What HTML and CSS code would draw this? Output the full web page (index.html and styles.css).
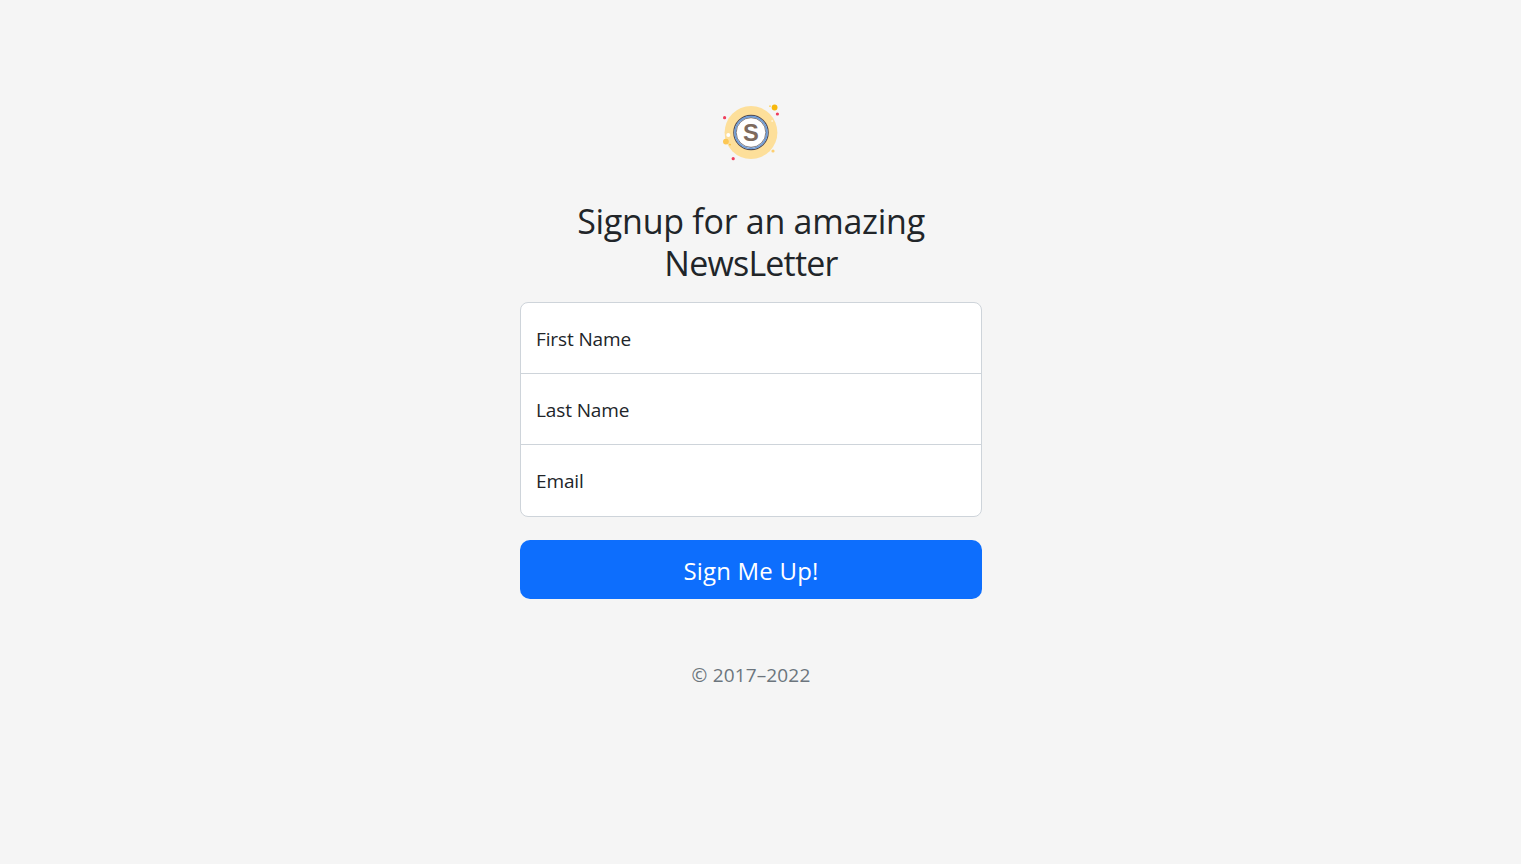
FILE: index.html
```html
<!DOCTYPE html>
<html lang="en">
<head>
<meta charset="utf-8">
<title>Newsletter Signup</title>
<link rel="stylesheet" href="styles.css">
</head>
<body>
<main class="signup">
  <form class="form">
    <svg class="logo" viewBox="0 0 72 72" aria-hidden="true">
      <circle cx="36" cy="36.5" r="26.4" fill="#fddf9a"/>
      <circle cx="36" cy="36.5" r="17.2" fill="#fff" stroke="#514a52" stroke-width="1.2"/>
      <circle cx="36" cy="36.5" r="15.9" fill="none" stroke="#6b9ddb" stroke-width="1.7"/>
      <circle cx="36" cy="36.5" r="14.8" fill="none" stroke="#514a52" stroke-width="0.7"/>
      <text class="logo-letter" x="28" y="44.6" textLength="15.8" lengthAdjust="spacingAndGlyphs">S</text>
      <circle cx="59.6" cy="11.5" r="2.9" fill="#f7b80c"/>
      <circle cx="55" cy="10.2" r="0.9" fill="#fbd36b"/>
      <circle cx="62.4" cy="18" r="1.6" fill="#ef3e5b"/>
      <circle cx="9.6" cy="21.7" r="1.6" fill="#ef3e5b"/>
      <circle cx="18.2" cy="62.7" r="1.6" fill="#ef3e5b"/>
      <circle cx="10.9" cy="45.6" r="2.9" fill="#fcc754"/>
      <circle cx="15" cy="48.6" r="0.9" fill="#f9bf35"/>
      <circle cx="13.3" cy="38.9" r="2" fill="#fff"/>
      <circle cx="57.2" cy="25" r="1" fill="#fff3d7"/>
      <circle cx="58" cy="55" r="1.6" fill="#fdcf70"/>
    </svg>
    <h1 class="title">Signup for an amazing <span class="title-tight">NewsLetter</span></h1>
    <div class="fields">
      <label class="field">First Name</label>
      <label class="field">Last Name</label>
      <label class="field">Email</label>
    </div>
    <button class="submit" type="button">Sign Me Up!</button>
    <p class="copyright">© 2017–2022</p>
  </form>
</main>
</body>
</html>
```
FILE: styles.css
```css
* { box-sizing: border-box; }
body {
  margin: 0;
  min-height: 864px;
  padding-right: 19px;
  background: #f5f5f5;
  color: #212529;
  font-family: "Segoe UI", "Open Sans", "Noto Sans", sans-serif;
}
.signup { display: flex; justify-content: center; padding-top: 96px; }
.form { width: 462px; display: flex; flex-direction: column; }
.logo { width: 72px; height: 72px; align-self: center; }
.logo-letter { font: 700 23px "Liberation Sans", Arial, sans-serif; fill: #7e6a5d; }
.title {
  margin: 32px 0 18px;
  font-size: 34px;
  line-height: 42px;
  font-weight: 400;
  letter-spacing: -0.27px;
  text-align: center;
}
.title-tight { letter-spacing: -0.8px; }
.fields {
  display: grid;
  grid-template-rows: 70px 71px 72px;
  border: 1px solid #ced4da;
  border-radius: 8px;
  background: #fff;
}
.field { display: flex; align-items: center; padding: 2px 15px 0; font-size: 19px; letter-spacing: -0.12px; }
.field + .field { border-top: 1px solid #ced4da; }
.field:last-child { padding-bottom: 2px; }
.submit {
  height: 59px;
  margin-top: 23px;
  padding: 1px 0 0;
  border: 0;
  border-radius: 10px;
  background: #0d6efd;
  color: #fff;
  font: 400 24px "Segoe UI", "Open Sans", "Noto Sans", sans-serif;
  letter-spacing: 0.2px;
}
.copyright {
  margin: 61px 0 0;
  font-size: 19px;
  line-height: 30px;
  letter-spacing: 0.15px;
  color: #6c757d;
  text-align: center;
}
```
